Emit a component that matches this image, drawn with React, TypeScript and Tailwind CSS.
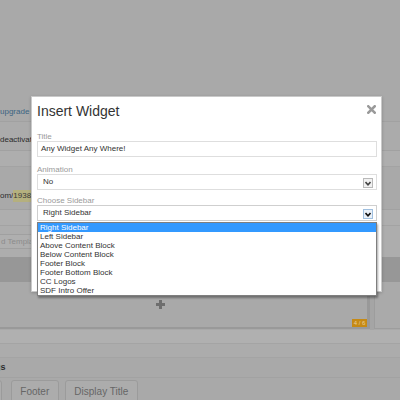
import React from "react";

const items = [
  "Right Sidebar",
  "Left Sidebar",
  "Above Content Block",
  "Below Content Block",
  "Footer Block",
  "Footer Bottom Block",
  "CC Logos",
  "SDF Intro Offer",
];

function Chevron({ focused }: { focused?: boolean }) {
  return (
    <div
      className={
        focused
          ? "absolute right-[3px] top-[3px] w-[10px] h-[10px] border border-[#9fbfdf] bg-[#e9f0f8] flex items-center justify-center"
          : "absolute right-[3px] top-[3px] w-[10px] h-[10px] border border-[#b9b9b9] bg-[#f1f1f1] flex items-center justify-center"
      }
    >
      <svg width="6" height="5" viewBox="0 0 6 5">
        <path d="M0.5 1 L3 3.8 L5.5 1" fill="none" stroke={focused ? "#111" : "#444"} strokeWidth="1.6" />
      </svg>
    </div>
  );
}

export default function App() {
  return (
    <div className="relative w-[400px] h-[400px] overflow-hidden bg-[#a9a9a9] font-['Liberation_Sans',Arial,sans-serif]">
      {/* underlying page (dimmed) */}
      <div className="flex flex-col">
        <div className="h-[97px]" />
        <div className="h-[25px] border-b border-[#a1a1a1] flex items-center pt-[6px] text-[8px] text-[#3b6482]">
          upgrade (
        </div>
        <div className="h-[29px] border-b border-[#a1a1a1] bg-[#ababab] flex items-center pt-[8px] text-[8px] text-[#2c2c2c]">
          deactivate
        </div>
        <div className="h-[16px] border-b border-[#a3a3a3] bg-[#aeaeae]" />
        <div className="h-[43px] border-b border-[#a1a1a1] flex items-end pb-[7px] text-[8px] text-[#2c2c2c]">
          <span>om/</span>
          <span className="bg-[#b5b07e] text-[#3a3a3a]">1938-</span>
        </div>
        <div className="h-[16px] bg-[#aeaeae] border-b border-[#a3a3a3]" />
        <div className="h-[31px] bg-[#adadad] flex items-center">
          <div className="h-[15px] w-[120px] -ml-[20px] border border-[#a0a0a0] bg-[#afafaf] flex items-center pl-[20px] text-[8px] text-[#8c8c8c]">
            d Template
          </div>
        </div>
        <div className="h-[25px] bg-[#979797]" />
        <div className="h-[48px] flex">
          <div className="relative w-[370px] h-[47px] border-r-[3px] border-b-[2px] border-[#999999] flex items-center justify-center pr-[46px]">
            <svg width="9" height="9" viewBox="0 0 9 9">
              <path d="M3 0 H6 V3 H9 V6 H6 V9 H3 V6 H0 V3 H3 Z" fill="#6e6e6e" />
            </svg>
            <div className="absolute right-0 bottom-0 w-[15px] h-[8px] bg-[#c68a14] text-[6px] leading-[8px] text-[#e9cf9c] text-center">
              4 / 6
            </div>
          </div>
          <div className="w-[4px] bg-[#a5a5a5]" />
          <div className="flex-1 h-[47px] border-l border-b border-[#9d9d9d] bg-[#aaaaaa]" />
        </div>
        <div className="h-[14px] bg-[#b0b0b0] border-b border-[#a4a4a4]" />
        <div className="h-[14px] bg-[#acacac] border-b border-[#a4a4a4]" />
        <div className="h-[20px] border-b border-[#a2a2a2] flex items-center pt-[1px] text-[9px] font-bold text-[#2e2e2e] -ml-[30px]">
          Settings
        </div>
        <div className="flex pt-[2px] -ml-[53px]">
          <div className="h-[24px] px-[10px] border border-[#9b9b9b] rounded-[3px] bg-[#acacac] text-[10px] leading-[22px] text-[#666]">
            Header
          </div>
          <div className="ml-[9px] h-[24px] w-[48px] border border-[#9b9b9b] rounded-[3px] bg-[#acacac] text-[10px] leading-[22px] text-[#666] text-center">
            Footer
          </div>
          <div className="ml-[6px] h-[24px] w-[73px] border border-[#9b9b9b] rounded-[3px] bg-[#acacac] text-[10px] leading-[22px] text-[#666] text-center">
            Display Title
          </div>
        </div>
      </div>

      {/* modal */}
      <div className="absolute left-[31px] top-[96px] w-[351px] h-[196px] bg-white border border-[#c9c9c9] shadow-[0_1px_3px_rgba(0,0,0,0.2)] pl-[5px] pr-[4px] flex flex-col">
        <div className="relative pt-[6px] h-[22px]">
          <div className="text-[14px] leading-[16px] text-[#333]">Insert Widget</div>
          <svg className="absolute right-[1px] top-[8px]" width="9" height="9" viewBox="0 0 9 9">
            <path d="M1.3 1.3 L7.7 7.7 M7.7 1.3 L1.3 7.7" stroke="#9a9a9a" strokeWidth="2.6" strokeLinecap="square" />
          </svg>
        </div>
        <div className="mt-[13px] text-[8px] leading-[9px] text-[#9a9a9a]">Title</div>
        <div className="h-[16px] border border-[#dedede] pl-[3px] flex items-center text-[8px] text-[#333]">
          Any Widget Any Where!
        </div>
        <div className="mt-[8px] text-[8px] leading-[9px] text-[#9a9a9a]">Animation</div>
        <div className="relative h-[16px] border border-[#dedede] pl-[5px] flex items-center text-[8px] text-[#333]">
          No
          <Chevron />
        </div>
        <div className="mt-[6px] text-[8px] leading-[9px] text-[#9a9a9a]">Choose Sidebar</div>
        <div className="relative">
          <div className="relative h-[16px] border border-[#cfcfcf] pl-[5px] flex items-center text-[8px] text-[#333]">
            Right Sidebar
            <Chevron focused />
          </div>
          <div className="absolute left-0 right-0 top-[17px] bg-white border border-[#7f7f7f] shadow-[1px_2px_2px_rgba(0,0,0,0.35)] flex flex-col z-10">
            {items.map((it, i) => (
              <div
                key={it}
                className={
                  i === 0
                    ? "h-[9px] leading-[9px] pl-[2px] text-[8px] bg-[#3399ff] text-white"
                    : "h-[9px] leading-[9px] pl-[2px] text-[8px] text-[#333]"
                }
              >
                {it}
              </div>
            ))}
          </div>
        </div>
      </div>
    </div>
  );
}
